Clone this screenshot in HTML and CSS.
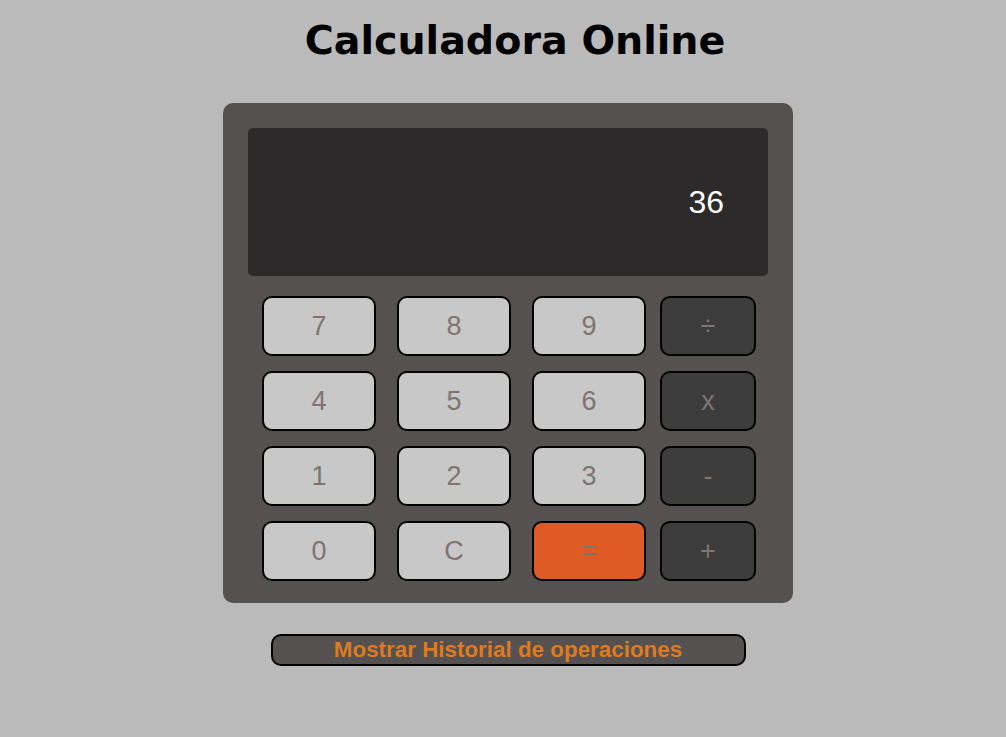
FILE: index.html
```html
<!DOCTYPE html>
<html lang="es">
<head>
<meta charset="utf-8">
<title>Calculadora Online</title>
<link rel="stylesheet" href="styles.css">
</head>
<body>
<h1 class="title">Calculadora Online</h1>
<div class="calc">
  <div class="display"><span class="value">36</span></div>
  <div class="keys">
    <button class="key num">7</button>
    <button class="key num">8</button>
    <button class="key num">9</button>
    <button class="key op">÷</button>
    <button class="key num">4</button>
    <button class="key num">5</button>
    <button class="key num">6</button>
    <button class="key op">x</button>
    <button class="key num">1</button>
    <button class="key num">2</button>
    <button class="key num">3</button>
    <button class="key op">-</button>
    <button class="key num">0</button>
    <button class="key num">C</button>
    <button class="key eq">=</button>
    <button class="key op">+</button>
  </div>
</div>
<div class="history-wrap">
  <button class="history">Mostrar Historial de operaciones</button>
</div>
</body>
</html>
```
FILE: styles.css
```css
html, body {
  margin: 0;
  padding: 0;
}
body {
  background: #bababa;
  font-family: "Liberation Sans", Arial, sans-serif;
  display: flex;
  flex-direction: column;
  align-items: center;
  padding-left: 10px;
}
.title {
  font-family: "DejaVu Sans", Verdana, sans-serif;
  font-weight: bold;
  font-size: 39.6px;
  line-height: 48px;
  margin: 16px 0 39px 14px;
  color: #000;
}
.calc {
  width: 570px;
  height: 500px;
  box-sizing: border-box;
  background: #555150;
  border-radius: 10px;
  padding: 25px 25px 22px;
}
.display {
  height: 148px;
  background: #2c2a2b;
  border-radius: 5px;
  display: flex;
  align-items: center;
  justify-content: flex-end;
  padding-right: 44px;
}
.value {
  color: #fff;
  font-size: 32px;
}
.keys {
  display: grid;
  grid-template-columns: 114px 114px 114px 96px;
  grid-auto-rows: 60px;
  column-gap: 21px;
  row-gap: 15px;
  margin: 20px 0 0 14px;
}
.keys .key:nth-child(4n) {
  margin-left: -7px;
}
.key {
  box-sizing: border-box;
  border: 2px solid #000;
  border-radius: 10px;
  font-family: "Liberation Sans", Arial, sans-serif;
  font-size: 27px;
  color: #7f7470;
  padding: 0;
  width: 100%;
  height: 100%;
}
.num { background: #c8c8c8; }
.op { background: #3c3c3c; }
.eq { background: #de5b25; }
.history-wrap {
  margin-top: 31px;
}
.history {
  width: 475px;
  height: 32px;
  box-sizing: border-box;
  background: #555150;
  border: 2px solid #000;
  border-radius: 10px;
  color: #de7a1f;
  font-family: "Liberation Sans", Arial, sans-serif;
  font-weight: bold;
  font-size: 22.4px;
  line-height: 26px;
  padding: 0;
}
```
